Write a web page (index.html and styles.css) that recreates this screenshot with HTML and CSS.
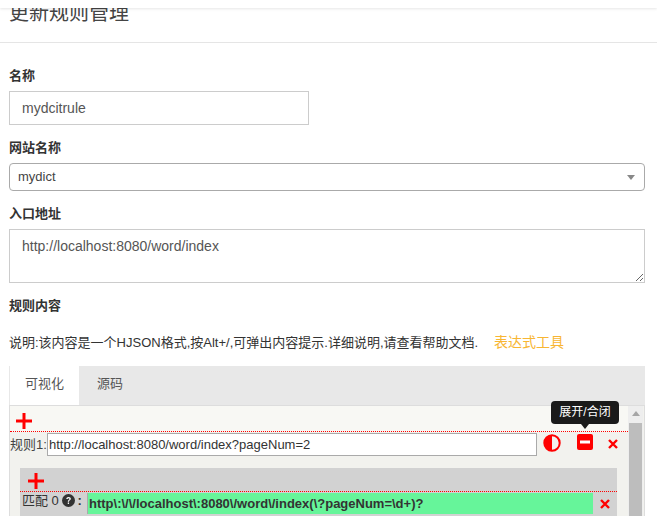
FILE: index.html
```html
<!DOCTYPE html>
<html lang="zh-CN">
<head>
    <meta charset="UTF-8">
    <meta name="viewport" content="width=device-width, initial-scale=1.0">
    <title>更新规则管理</title>
    <link rel="stylesheet" href="styles.css">
</head>
<body>
    <div class="topbar"></div>
    <div class="page-header">
        <h1>更新规则管理</h1>
    </div>

    <form class="form">
        <div class="form-group">
            <label>名称</label>
            <input class="form-control name-input" type="text" value="mydcitrule">
        </div>
        <div class="form-group">
            <label>网站名称</label>
            <div class="select">
                <span>mydict</span>
                <i class="select-arrow"></i>
            </div>
        </div>
        <div class="form-group">
            <label>入口地址</label>
            <textarea class="form-control url-input">http://localhost:8080/word/index</textarea>
        </div>
        <div class="form-group">
            <label>规则内容</label>
            <p class="help">说明:该内容是一个HJSON格式,按Alt+/,可弹出内容提示.详细说明,请查看帮助文档.<a class="tool-link" href="#">表达式工具</a></p>
        </div>

        <div class="tabs">
            <div class="tab-bar">
                <a class="tab active" href="#">可视化</a>
                <a class="tab" href="#">源码</a>
            </div>
            <div class="tab-body">
                <div class="editor">
                    <div class="add-row">
                        <svg class="plus" viewBox="0 0 16 16"><path d="M6.5 0h3v6.5H16v3H9.5V16h-3V9.5H0v-3h6.5z"/></svg>
                    </div>
                    <div class="rule-row">
                        <span class="rule-label">规则1:</span>
                        <input class="rule-input" type="text" value="http://localhost:8080/word/index?pageNum=2">
                        <svg class="icon half" viewBox="0 0 18 18"><circle cx="9" cy="9" r="7.700" fill="none" stroke="#f00" stroke-width="2"/><path d="M9 1.500a7.500 7.500 0 0 0 0 15z" fill="#f00"/></svg>
                        <span class="collapse-wrap">
                            <svg class="icon" viewBox="0 0 16 16"><rect width="16" height="16" rx="2" fill="#f00"/><rect x="3" y="6.500" width="10" height="3" fill="#fff"/></svg>
                            <span class="tooltip">展开/合闭</span>
                        </span>
                        <svg class="close" viewBox="0 0 10 10"><path d="M1 1l8 8M9 1l-8 8" stroke="#f00" stroke-width="2.400" fill="none"/></svg>
                    </div>
                    <div class="match">
                        <div class="add-row match-add">
                            <svg class="plus" viewBox="0 0 16 16"><path d="M6.5 0h3v6.5H16v3H9.5V16h-3V9.5H0v-3h6.5z"/></svg>
                        </div>
                        <div class="match-row">
                            <span class="match-label">匹配 0
                                <svg class="help-icon" viewBox="0 0 14 14"><circle cx="7" cy="7" r="7" fill="#333"/><path d="M4.600 5.400C4.700 4 5.700 3.200 7.100 3.200c1.400 0 2.400.8 2.400 2 0 1.800-2 1.600-2 3.100H6.200c0-2.100 1.900-2 1.900-3 0-.5-.4-.8-1-.8s-1 .4-1.100.9z" fill="#fff"/><rect x="6.200" y="9.100" width="1.400" height="1.600" fill="#fff"/></svg><b>:</b></span>
                            <span class="match-expr">http\:\/\/localhost\:8080\/word\/index(\?pageNum=\d+)?</span>
                            <svg class="close" viewBox="0 0 10 10"><path d="M1 1l8 8M9 1l-8 8" stroke="#f00" stroke-width="2.400" fill="none"/></svg>
                        </div>
                    </div>
                </div>
                <div class="scrollbar">
                    <i class="scroll-up"></i>
                    <div class="scroll-thumb"></div>
                </div>
            </div>
        </div>
    </form>
</body>
</html>
```

FILE: styles.css
```css
* {
    box-sizing: border-box;
}

html, body {
    height: 516px;
    overflow: hidden;
}

body {
    margin: 0;
    background-color: #fff;
    color: #333;
    font-family: "Liberation Sans", Arial, "Noto Sans CJK SC", sans-serif;
    font-size: 14px;
    line-height: 20px;
}

.topbar {
    position: absolute;
    top: 0;
    left: 0;
    right: 0;
    height: 8px;
    background-color: #fff;
    box-shadow: 0 1px 3px rgba(0, 0, 0, 0.1);
}

.page-header {
    height: 43px;
    padding: 3px 9px 0;
    border-bottom: 1px solid #e5e5e5;
}

.page-header h1 {
    margin: 0;
    font-size: 20px;
    font-weight: 400;
    line-height: 20px;
    color: #444;
}

.form {
    padding: 23px 12px 0 9px;
}

.form-group {
    margin-bottom: 13px;
}

label {
    display: block;
    height: 20px;
    margin-bottom: 5px;
    font-size: 13px;
    font-weight: 700;
}

.form-control {
    display: block;
    padding: 6px 12px;
    border: 1px solid #ccc;
    background-color: #fff;
    color: #555;
    font-family: inherit;
    font-size: 14px;
    line-height: 20px;
}

.name-input {
    width: 300px;
    height: 34px;
}

.select {
    display: flex;
    align-items: center;
    justify-content: space-between;
    height: 28px;
    padding: 0 9px 0 8px;
    border: 1px solid #aaa;
    border-radius: 4px;
    font-size: 13px;
    color: #444;
}

.select-arrow {
    width: 0;
    height: 0;
    border-top: 5px solid #888;
    border-left: 4px solid transparent;
    border-right: 4px solid transparent;
}

.url-input {
    width: 100%;
    height: 54px;
    resize: vertical;
}

.help {
    margin: 16px 0 0;
    font-size: 13px;
}

.tool-link {
    margin-left: 16px;
    color: #f8b633;
    font-size: 14px;
    text-decoration: none;
}

.tabs {
    margin-top: 1px;
}

.tab-bar {
    display: flex;
    height: 40px;
    background-color: #e8e8e8;
    border-bottom: 1px solid #ddd;
}

.tab {
    padding: 8px 18px;
    color: #555;
    font-size: 13px;
    text-decoration: none;
}

.tab.active {
    width: 69px;
    height: 39px;
    margin-left: 1px;
    padding: 8px 15px 0;
    background-color: #fff;
}

.tab-body {
    display: flex;
    height: 110px;
    border-left: 1px solid #ddd;
    border-right: 1px solid #ddd;
    background-color: #f2f2ee;
}

.editor {
    flex: 1;
    min-width: 0;
}

.add-row {
    height: 26px;
    padding: 7px 0 0 6px;
    border-bottom: 1px dotted #f00;
    background-color: #f8f8f4;
}

.plus {
    display: block;
    width: 16px;
    height: 16px;
    fill: #f00;
}

.rule-row {
    display: flex;
    align-items: center;
    height: 25px;
    padding: 1px 0;
}

.rule-label {
    width: 37px;
    font-size: 13px;
    color: #444;
    white-space: nowrap;
}

.rule-input {
    width: 490px;
    height: 23px;
    padding: 0 1px;
    border: 1px solid #aaa;
    background-color: #fff;
    color: #333;
    font-family: inherit;
    font-size: 13px;
}

.icon {
    display: block;
    width: 18px;
    height: 18px;
}

.half {
    margin: 0 0 3px 6px;
}

.collapse-wrap {
    position: relative;
    margin: 0 0 5px 16px;
}

.collapse-wrap .icon {
    width: 16px;
    height: 16px;
}

.tooltip {
    position: absolute;
    top: -33px;
    left: -26px;
    width: 68px;
    height: 23px;
    border-radius: 4px;
    background-color: #1a1a1a;
    color: #fff;
    font-size: 12px;
    line-height: 23px;
    text-align: center;
}

.tooltip::after {
    content: "";
    position: absolute;
    left: 30px;
    bottom: -5px;
    border-top: 5px solid #1a1a1a;
    border-left: 4px solid transparent;
    border-right: 4px solid transparent;
}

.close {
    display: block;
    width: 10px;
    height: 10px;
    margin: 0 0 1px 15px;
}

.match {
    width: 597px;
    margin: 11px 0 0 10px;
    background-color: #d2d2d2;
}

.match-add {
    height: 24px;
    padding: 5px 0 0 8px;
    background-color: transparent;
}

.match-row {
    display: flex;
    height: 25px;
    padding-top: 1px;
}

.match-label {
    width: 67px;
    padding-left: 2px;
    font-size: 13px;
    line-height: 15px;
    white-space: nowrap;
}

.match-label b {
    margin-left: 2px;
}

.help-icon {
    width: 13px;
    height: 13px;
    vertical-align: -2px;
}

.match-expr {
    flex: 1;
    height: 21px;
    padding-left: 1px;
    border-left: 1px solid #aaa;
    background-color: #66f59a;
    color: #333;
    font-size: 13px;
    font-weight: 700;
    line-height: 21px;
    white-space: nowrap;
}

.match-row .close {
    margin: 6px 7px 0;
}

.scrollbar {
    width: 15px;
    margin-right: 1px;
    background-color: #eee;
}

.scroll-up {
    display: block;
    width: 0;
    margin: 5px auto 7px;
    border-bottom: 5px solid #a6a6a6;
    border-left: 4px solid transparent;
    border-right: 4px solid transparent;
}

.scroll-thumb {
    height: 100%;
    margin: 0 1px;
    background-color: #bdbdbd;
}
```
